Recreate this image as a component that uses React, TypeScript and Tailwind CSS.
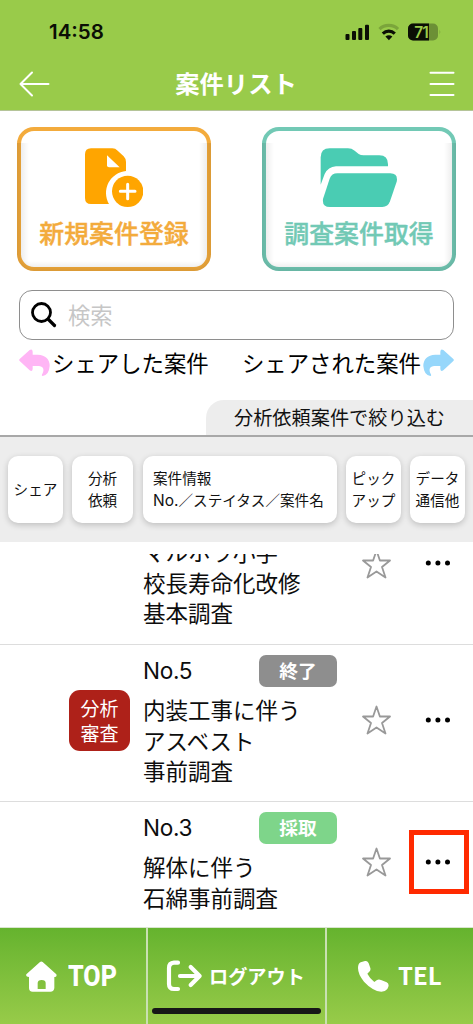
import React from "react";

const jp = "font-['Noto_Sans_CJK_JP',sans-serif]";
const latin = "font-['Inter','Noto_Sans_CJK_JP',sans-serif]";

function StatusBar() {
  return (
    <div className="flex h-[63px] items-center justify-between pr-[31px] pl-[49px]">
      <span className="text-[20.5px] leading-[63px] font-semibold text-[#0b0f05] font-['Inter',sans-serif]">14:58</span>
      <svg width="97" height="20" viewBox="0 0 97 20">
        <g fill="#0b0f05">
          <rect x="0.500" y="12" width="4" height="6" rx="1" />
          <rect x="7" y="9" width="4" height="9" rx="1" />
          <rect x="13.300" y="6" width="4" height="12" rx="1" />
          <rect x="20" y="2.700" width="4" height="15.300" rx="1" />
        </g>
        <g fill="none" strokeWidth="3.2">
          <path d="M34.500 7.200c5-5 13.500-5 18.500 0" stroke="#7ba53b" />
          <path d="M37.800 11.600c3.500-3.200 8.500-3.200 12 0" stroke="#0b0f05" />
        </g>
        <path d="M40.400 14.600q3.500-2.500 7 0l-3.500 3.600z" fill="#0b0f05" />
        <rect x="63" y="1.500" width="30" height="17" rx="5" fill="#6c9036" />
        <path d="M68 1.500h16v17H68a5 5 0 0 1-5-5v-7a5 5 0 0 1 5-5z" fill="#0b0f05" />
        <path d="M94.500 7.500q1.700 2.400 0 5z" fill="#7ba53b" />
        <text x="69.300" y="15.500" fontSize="15.500" fontWeight="600" fill="#9bcc4a" fontFamily="Inter, sans-serif" letterSpacing="-0.900">71</text>
      </svg>
    </div>
  );
}

function Header() {
  return (
    <header className="h-[111px] shrink-0 border-b border-[#b5c499] bg-[#99cb4a]">
      <StatusBar />
      <div className="flex h-[42px] items-center justify-between pr-[18px] pl-[19px] text-white">
        <svg width="32" height="26" viewBox="0 0 32 26" fill="none" stroke="currentColor" strokeWidth="2" strokeLinecap="round" strokeLinejoin="round">
          <path d="M29.500 13H1.500M13 1.500 1.500 13 13 24.500" />
        </svg>
        <h1 className="mr-[4px] -ml-[4px] pb-[3px] text-[24.300px] leading-[39px] font-bold">案件リスト</h1>
        <svg width="26" height="26" viewBox="0 0 26 26" stroke="currentColor" strokeWidth="2" strokeLinecap="round">
          <path d="M1.500 1.700h23M1.500 13h23M1.500 24h23" />
        </svg>
      </div>
    </header>
  );
}

function InnerShade() {
  return (
    <span className="pointer-events-none absolute -inset-x-[4px] top-[12px] -bottom-[4px] overflow-hidden rounded-b-[17px]">
      <span className="absolute inset-y-0 left-0 w-[12px] bg-linear-to-r from-black/10 to-transparent" />
      <span className="absolute inset-y-0 right-0 w-[12px] bg-linear-to-l from-black/10 to-transparent" />
      <span className="absolute inset-x-0 bottom-0 h-[10px] bg-linear-to-t from-black/10 to-transparent" />
    </span>
  );
}

const action = "relative flex h-[144px] w-[194px] flex-col items-center rounded-[17px] border-[4.5px] bg-white pt-[17px]";

function Actions() {
  return (
    <div className="flex justify-between px-[17px]">
      <button className={action + " border-[#f3ab3c] text-[#f3ab3c]"}>
        <svg className="-ml-[2px] shrink-0" width="60" height="60" viewBox="0 0 180 180">
          <path d="M20 1H88Q97 1 104 8L122 25Q129 32 129 42V69A66 66 0 0 0 78 168H24Q6 168 6 150V19Q6 1 24 1Z" fill="#ffa500" />
          <path d="M72 22V52Q72 58 78 58H110Z" fill="#fff" />
          <circle cx="134" cy="130" r="47" fill="#ffa500" />
          <path d="M134 109v43M112 130h44" stroke="#fff" strokeWidth="9" strokeLinecap="round" />
        </svg>
        <span className="text-[24.900px] leading-[48px] font-medium [-webkit-text-stroke:0.4px_currentColor]">新規案件登録</span>
        <InnerShade />
      </button>
      <button className={action + " border-[#72c9b5] text-[#72c9b5]"}>
        <svg className="-ml-[1px] shrink-0" width="77" height="60" viewBox="0 0 231 180" fill="#4accb3">
          <path d="M2 110V28Q2 1 29 1H84Q95 1 104 8L116 18Q122 22 131 22H178Q204 22 204 49V55H48Q24 57 14 78Z" />
          <path d="M52 76H211Q235 77 230 101L210 160Q204 177 187 177H30Q6 177 9 153L29 92Q35 76 52 76Z" />
        </svg>
        <span className="text-[24.900px] leading-[48px] font-medium [-webkit-text-stroke:0.4px_currentColor]">調査案件取得</span>
        <InnerShade />
      </button>
    </div>
  );
}

function Search() {
  return (
    <div className="mx-[19px] mt-[19px] flex h-[50px] items-center gap-[11px] rounded-[13px] border border-[#8e8e8e] pl-[11px]">
      <svg width="26" height="26" viewBox="0 0 26 26" fill="none" stroke="#000" strokeLinecap="round">
        <circle cx="10.500" cy="10.500" r="9" strokeWidth="2.800" />
        <path d="M17.500 17.500 23.500 23.500" strokeWidth="3.200" />
      </svg>
      <span className="pb-[2px] text-[22.300px] leading-[46px] text-[#c6c6c6]">検索</span>
    </div>
  );
}

function ShareArrow({ color, flip }: { color: string; flip?: boolean }) {
  return (
    <svg className={flip ? "-scale-x-100" : ""} width="31" height="28" viewBox="0 0 93 84" fill={color}>
      <path d="M2 30 32 3Q40-2 41 8V17H56Q92 19 92 51Q90 78 71 81Q66 80 71 73Q79 54 60 51H41V60Q40 69 32 64L2 36Q-1 33 2 30Z" />
    </svg>
  );
}

function ShareLinks() {
  return (
    <div className="flex h-[60px] items-start justify-between px-[19px] pt-[9px] text-[22.400px] leading-[26px] text-black">
      <span className="flex items-start gap-[2px]">
        <ShareArrow color="#ffb5f5" />
        シェアした案件
      </span>
      <span className="flex items-start gap-[2px]">
        シェアされた案件
        <ShareArrow color="#96d7fb" flip />
      </span>
    </div>
  );
}

const headCard = "flex h-[67px] flex-col justify-center rounded-[10px] bg-white pb-[1px] shadow-[0_2px_6px_rgba(0,0,0,0.2)]";

function TableHead() {
  return (
    <div className="flex h-[107px] shrink-0 items-start border-t-2 border-[#a8a8a8] bg-[#ededed] pt-[19px] pl-[8px] text-center text-[14.600px] leading-[22px] whitespace-nowrap text-[#111]">
      <div className={headCard + " w-[55px]"}><span>シェア</span></div>
      <div className={headCard + " ml-[9px] w-[61px]"}><span>分析</span><span>依頼</span></div>
      <div className={headCard + " ml-[10px] w-[194px] pl-[10px] text-left"}>
        <span>案件情報</span>
        <span><span className="text-[15.500px] font-['Inter',sans-serif]">No.</span>／ステイタス／案件名</span>
      </div>
      <div className={headCard + " ml-[9px] w-[55px]"}><span>ピック</span><span>アップ</span></div>
      <div className={headCard + " ml-[9px] w-[55px]"}><span>データ</span><span>通信他</span></div>
    </div>
  );
}

function Star() {
  return (
    <svg width="31" height="31" viewBox="0 0 31 31" fill="none" stroke="#999" strokeWidth="1.800" strokeLinejoin="round">
      <path d="M15.500 1.500 18.900 11.500H29L21 18 24.500 28.500 15.500 22.500 6.500 28.500 10 18 2 11.500H12.100Z" />
    </svg>
  );
}

function Dots() {
  return (
    <svg width="26" height="6" viewBox="0 0 26 6" fill="#000">
      <circle cx="3.300" cy="3" r="2.500" />
      <circle cx="12.900" cy="3" r="2.500" />
      <circle cx="22.500" cy="3" r="2.500" />
    </svg>
  );
}

function RowHead({ no, status, color }: { no: string; status: string; color: string }) {
  return (
    <div className="flex h-[32px] items-center justify-between">
      <span className={"text-[22.600px] leading-[32px] tracking-[-0.300px] " + latin}>{no}</span>
      <span className={"h-[32px] w-[78px] rounded-[7px] text-center text-[18.700px] leading-[30px] font-bold text-white " + color}>{status}</span>
    </div>
  );
}

function List() {
  return (
    <main className="h-[385px] shrink-0 overflow-hidden bg-white text-[22.500px] leading-[30.600px] text-[#0d0d0d]">
      <section className="flex h-[103px] border-b border-[#ddd] pt-[12px]">
        <div className="flex h-[90px] w-full overflow-hidden">
          <div className="-mt-[18px] ml-[143px] w-[194px]">マルホラ小学<br />校長寿命化改修<br />基本調査</div>
          <div className="-mt-[5px] ml-[24px] w-[31px]"><Star /></div>
          <div className="mt-[6px] ml-[33px] flex h-[6px]"><Dots /></div>
        </div>
      </section>
      <section className="flex h-[157px] border-b border-[#ddd]">
        <div className="mt-[45px] ml-[69px] flex h-[61px] w-[61px] flex-col justify-center rounded-[11px] bg-[#ae2119] pb-[2px] text-center text-[19px] leading-[25px] text-white">
          <span>分析</span><span>審査</span>
        </div>
        <div className="ml-[13px] w-[194px] pt-[10px]">
          <RowHead no="No.5" status="終了" color="bg-[#8e8e8e]" />
          <div className="mt-[7px]">内装工事に伴う<br />アスベスト<br />事前調査</div>
        </div>
        <div className="mt-[60px] ml-[24px] w-[31px]"><Star /></div>
        <div className="mt-[72px] ml-[33px] flex h-[6px]"><Dots /></div>
      </section>
      <section className="flex">
        <div className="ml-[143px] w-[194px] pt-[10px]">
          <RowHead no="No.3" status="採取" color="bg-[#7ed58a]" />
          <div className="mt-[7px]">解体に伴う<br />石綿事前調査</div>
        </div>
        <div className="mt-[45px] ml-[24px] w-[31px]"><Star /></div>
        <div className="mt-[28px] ml-[17px] flex h-[64px] w-[60px] items-center justify-center border-[5px] border-[#ff2a00] pr-[2px]"><Dots /></div>
      </section>
    </main>
  );
}

function Footer() {
  return (
    <footer className="relative flex h-[97px] shrink-0 border-t border-[#d9e5cf] bg-linear-to-b from-[#65b32e] to-[#97cb49] font-bold text-white">
      <div className="flex h-[96px] w-[146px] items-center pl-[26px]">
        <svg width="31" height="31" viewBox="0 0 93 93" fill="currentColor">
          <path fillRule="evenodd" d="M42 3Q46 0 50 3L91 40Q94 48 85 48V81Q84 92 73 92H20Q9 92 9 81V48Q-2 48 1 40ZM35 84H59V66Q59 57 47 57Q35 57 35 66Z" />
        </svg>
        <span className="ml-[11px] w-[49px]">
          <span className="block w-[58px] origin-left scale-x-[0.850] text-[29.500px] leading-[30px] font-extrabold font-['Roboto',sans-serif]">TOP</span>
        </span>
      </div>
      <div className="flex h-[96px] w-[181px] items-center border-x-2 border-[#c9e0b2] pl-[18px]">
        <svg width="37" height="32" viewBox="0 0 111 96" fill="none" stroke="currentColor" strokeWidth="12.500" strokeLinecap="round" strokeLinejoin="round">
          <path d="M36 8H24Q9 9 9 24V72Q9 87 24 87H36M42 48H100M74 21 101 48 74 75" />
        </svg>
        <span className="ml-[6px] text-[19.200px] leading-[30px]">ログアウト</span>
      </div>
      <div className="flex h-[96px] items-center pl-[31px]">
        <svg width="31" height="31" viewBox="0 0 93 93" fill="currentColor">
          <path d="M8 4 21 0Q29-1 32 7L37 21Q39 28 33 33L28 38Q36 53 49 63L56 58Q62 53 69 57L86 64Q94 69 91 77L88 84Q82 92 70 92Q44 90 18 62Q0 40 0 21Q0 8 8 4Z" />
        </svg>
        <span className="ml-[9px] pb-[2px] text-[24px] leading-[28px]">TEL</span>
      </div>
      <div className="absolute bottom-[10px] left-[152px] h-[6px] w-[169px] rounded-full bg-[#171717]" />
    </footer>
  );
}

export default function App() {
  return (
    <div className={"flex h-[1024px] w-[473px] flex-col overflow-hidden bg-white " + jp}>
      <Header />
      <div className="h-[324px] shrink-0 pt-[16px]">
        <Actions />
        <Search />
        <ShareLinks />
        <div className="ml-auto h-[36px] w-[267px] rounded-tl-[18px] bg-[#ededed] pl-[28px] text-[19.200px] leading-[35px] whitespace-nowrap text-[#111]">
          分析依頼案件で絞り込む
        </div>
      </div>
      <TableHead />
      <List />
      <Footer />
    </div>
  );
}
